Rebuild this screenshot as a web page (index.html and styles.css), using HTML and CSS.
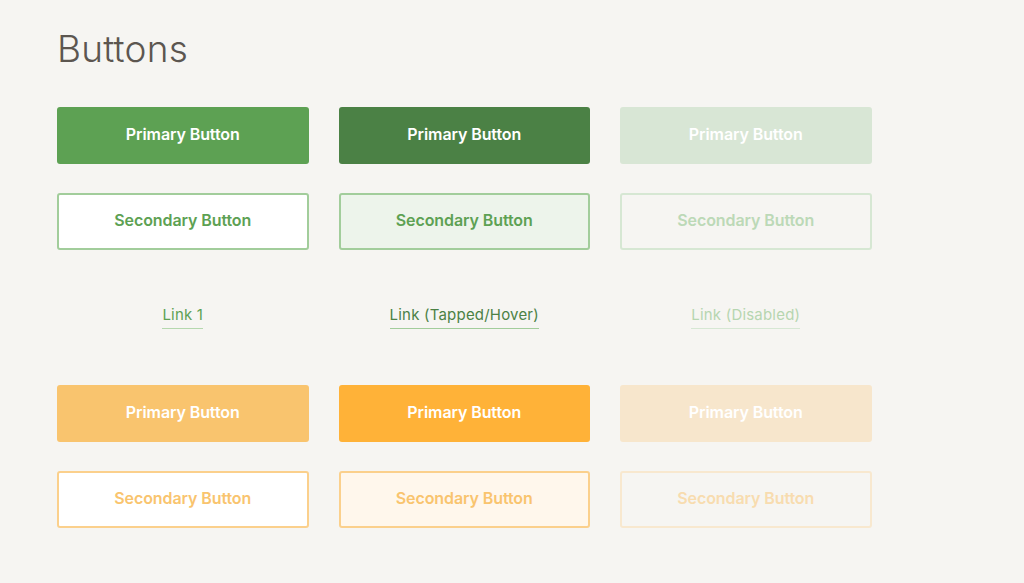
FILE: index.html
```html
<!DOCTYPE html>
<html>
<head>
<meta charset="utf-8">
<link rel="stylesheet" href="styles.css">
</head>
<body>
<main class="page">
  <h1 class="title">Buttons</h1>
  <div class="grid">
    <div class="btn primary green">Primary Button</div>
    <div class="btn primary green-active">Primary Button</div>
    <div class="btn primary green-disabled">Primary Button</div>

    <div class="btn secondary green">Secondary Button</div>
    <div class="btn secondary green-active">Secondary Button</div>
    <div class="btn secondary green-disabled">Secondary Button</div>

    <div class="link-cell"><span class="link">Link 1</span></div>
    <div class="link-cell"><span class="link hover">Link (Tapped/Hover)</span></div>
    <div class="link-cell"><span class="link disabled">Link (Disabled)</span></div>

    <div class="btn primary orange">Primary Button</div>
    <div class="btn primary orange-active">Primary Button</div>
    <div class="btn primary orange-disabled">Primary Button</div>

    <div class="btn secondary orange">Secondary Button</div>
    <div class="btn secondary orange-active">Secondary Button</div>
    <div class="btn secondary orange-disabled">Secondary Button</div>
  </div>
</main>
</body>
</html>
```

FILE: styles.css
```css
html, body {
  margin: 0;
  padding: 0;
  background: #f6f5f2;
  font-family: Inter, "Open Sans", "Liberation Sans", sans-serif;
}

.page {
  padding: 29px 0 0 57px;
}

.title {
  margin: 0 0 38px 0;
  font-size: 37px;
  font-weight: 300;
  line-height: 40px;
  color: #5c5650;
  letter-spacing: 0.2px;
}

.grid {
  display: grid;
  grid-template-columns: 251.5px 251.5px 251.5px;
  column-gap: 30px;
  row-gap: 29px;
}

.btn {
  box-sizing: border-box;
  height: 57px;
  padding-bottom: 4px;
  border-radius: 3px;
  display: flex;
  align-items: center;
  justify-content: center;
  font-size: 16px;
  font-weight: 600;
  letter-spacing: -0.1px;
}

.primary { color: #ffffff; }

.primary.green { background: #5da153; }
.primary.green-active { background: #4b8145; }
.primary.green-disabled { background: #d8e6d5; }

.primary.orange { background: #f9c46e; }
.primary.orange-active { background: #ffb238; }
.primary.orange-disabled { background: #f7e6cc; }

.secondary { border: 2px solid; }

.secondary.green { background: #ffffff; border-color: #a2cd9b; color: #5da153; }
.secondary.green-active { background: #edf4eb; border-color: #a2cd9b; color: #5da153; }
.secondary.green-disabled { background: transparent; border-color: #d6e7d3; color: #bcd9b7; }

.secondary.orange { background: #ffffff; border-color: #fbd08c; color: #f9c46e; }
.secondary.orange-active { background: #fff7ec; border-color: #fbd08c; color: #f9c46e; }
.secondary.orange-disabled { background: transparent; border-color: #f8e8cf; color: #f8dcaf; }

.link-cell {
  height: 107px;
  margin: -15px 0;
  display: flex;
  align-items: center;
  justify-content: center;
}

.link {
  font-size: 15px;
  font-weight: 400;
  color: #5da153;
  padding-bottom: 4px;
  border-bottom: 1px solid #b5d8ae;
  line-height: 18px;
  letter-spacing: 0.2px;
}

.link.hover { color: #4b8145; border-bottom-color: #a2cd9b; }
.link.disabled { color: #b6d6b0; border-bottom-color: #d6e7d3; }
```
